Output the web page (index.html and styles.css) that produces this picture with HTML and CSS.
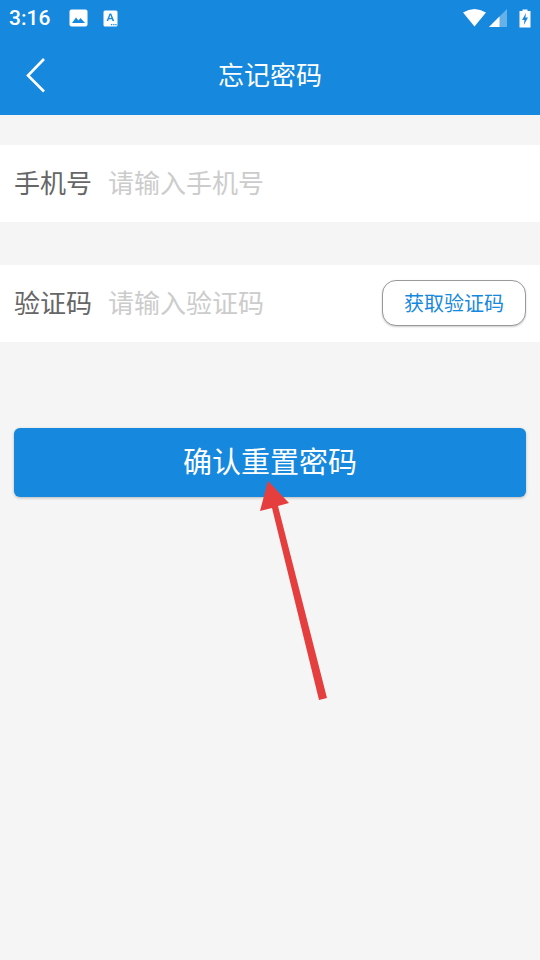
FILE: index.html
```html
<!DOCTYPE html>
<html lang="zh-CN">

<head>
  <meta charset="UTF-8">
  <meta name="viewport" content="width=device-width, initial-scale=1.0">
  <title>忘记密码</title>
  <link rel="stylesheet" href="styles.css">
</head>

<body>

  <header class="header">
    <div class="statusbar">
      <span class="hora">3:16</span>
      <svg class="icono-foto" width="19" height="18" viewBox="0 0 19 18">
        <rect x="0.5" y="0.5" width="18" height="17" rx="2" fill="#fff" />
        <path d="M3 14 L7 8.5 L9.5 11.5 L11.5 9 L16 14 Z" fill="#1688dd" />
      </svg>
      <svg class="icono-texto" width="15" height="17" viewBox="0 0 15 17">
        <rect x="0.5" y="0.5" width="14" height="16" rx="1.5" fill="#fff" />
        <path d="M3.6 11 L6.6 3.4 H8.2 L11.2 11 H9.5 L8.9 9.3 H5.8 L5.2 11 Z M6.3 7.9 H8.4 L7.4 5 Z" fill="#1688dd" />
        <path d="M8 14 h1.3 v1.2 h-1.3 Z M10.2 14 h1.3 v1.2 h-1.3 Z M12.3 14 h1.3 v1.2 h-1.3 Z" fill="#1688dd" />
      </svg>
      <div class="status-derecha">
        <svg width="23" height="18" viewBox="0 0 23 18">
          <path d="M0 3.5 Q11.5 -3.5 23 3.5 L11.5 17.5 Z" fill="#fff" />
        </svg>
        <svg class="icono-senal" width="18" height="18" viewBox="0 0 18 18">
          <path d="M18 0 V18 H0 Z" fill="#fff" opacity="0.35" />
          <path d="M10.5 7.5 V18 H0 Z" fill="#fff" />
        </svg>
        <svg class="icono-bateria" width="12" height="19" viewBox="0 0 12 19">
          <path d="M3.5 0.5 H8.5 V2 H11.5 V18.5 H0.5 V2 H3.5 Z" fill="#fff" />
          <path d="M7 4 L3 11 H5.5 L4.8 16 L9 8.6 H6.4 Z" fill="#1688dd" />
        </svg>
      </div>
    </div>
    <div class="toolbar">
      <svg class="atras" width="22" height="36" viewBox="0 0 22 36">
        <path d="M19 2 L3 18.5 L19 34.5" fill="none" stroke="#fff" stroke-width="2.6" />
      </svg>
      <h1 class="titulo">忘记密码</h1>
    </div>
  </header>

  <div class="fila fila-telefono">
    <label class="etiqueta" for="telefono">手机号</label>
    <input id="telefono" class="campo" type="text" placeholder="请输入手机号">
  </div>

  <div class="fila fila-codigo">
    <label class="etiqueta" for="codigo">验证码</label>
    <input id="codigo" class="campo" type="text" placeholder="请输入验证码">
    <button class="btn-codigo">获取验证码</button>
  </div>

  <button class="btn-confirmar">确认重置密码</button>

  <svg class="flecha" width="80" height="230" viewBox="0 0 80 230">
    <path d="M13 1 L34 23 L23 26 L72 218 L64 220 L17 28 L5 31 Z" />
  </svg>

</body>

</html>
```

FILE: styles.css
```css
body {
  margin: 0;
  min-height: 960px;
  position: relative;
  background-color: #f5f5f5;
  font-family: "Noto Sans CJK SC", sans-serif;
}

.header {
  height: 115px;
  background-color: #1688dd;
  color: #fff;
}

.statusbar {
  height: 36px;
  display: flex;
  align-items: center;
  padding: 0 9px;
}

.hora {
  font-family: "Roboto", sans-serif;
  font-size: 21px;
  font-weight: 500;
  width: 60px;
}

.icono-foto {
  margin-right: 15px;
}

.status-derecha {
  margin-left: auto;
  display: flex;
  align-items: center;
  gap: 3px;
}

.icono-bateria {
  margin-left: 9px;
}

.toolbar {
  height: 79px;
  display: flex;
  align-items: center;
  justify-content: center;
  position: relative;
}

.atras {
  position: absolute;
  left: 25px;
  top: 21px;
}

.titulo {
  margin: 0 0 5px;
  font-size: 26px;
  font-weight: 400;
}

.fila {
  height: 77px;
  background: #fff;
  display: flex;
  align-items: center;
  padding: 0 14px;
}

.fila-telefono {
  margin-top: 30px;
}

.fila-codigo {
  margin-top: 43px;
}

.etiqueta {
  width: 94px;
  margin-bottom: 4px;
  font-size: 26px;
  color: #666;
}

.campo {
  flex: 1;
  min-width: 0;
  margin-bottom: 4px;
  border: none;
  outline: none;
  padding: 0;
  background: transparent;
  font-family: inherit;
  font-size: 26px;
  color: #333;
}

.campo::placeholder {
  color: #ccc;
}

.btn-codigo {
  width: 144px;
  height: 46px;
  margin-top: -1px;
  background: #fff;
  border: 1px solid #999;
  border-radius: 14px;
  box-shadow: 0 1px 2px rgba(0, 0, 0, 0.2);
  color: #1688dd;
  font-family: inherit;
  font-size: 20px;
  padding: 0 0 2px;
}

.btn-confirmar {
  display: block;
  width: 512px;
  height: 69px;
  margin: 86px 14px 0;
  background-color: #1688dd;
  border: none;
  border-radius: 6px;
  box-shadow: 0 1px 3px rgba(0, 0, 0, 0.25);
  color: #fff;
  font-family: inherit;
  font-size: 29px;
  padding: 0 0 5px;
}

.flecha {
  position: absolute;
  left: 255px;
  top: 480px;
  fill: #e53e3e;
}
```
